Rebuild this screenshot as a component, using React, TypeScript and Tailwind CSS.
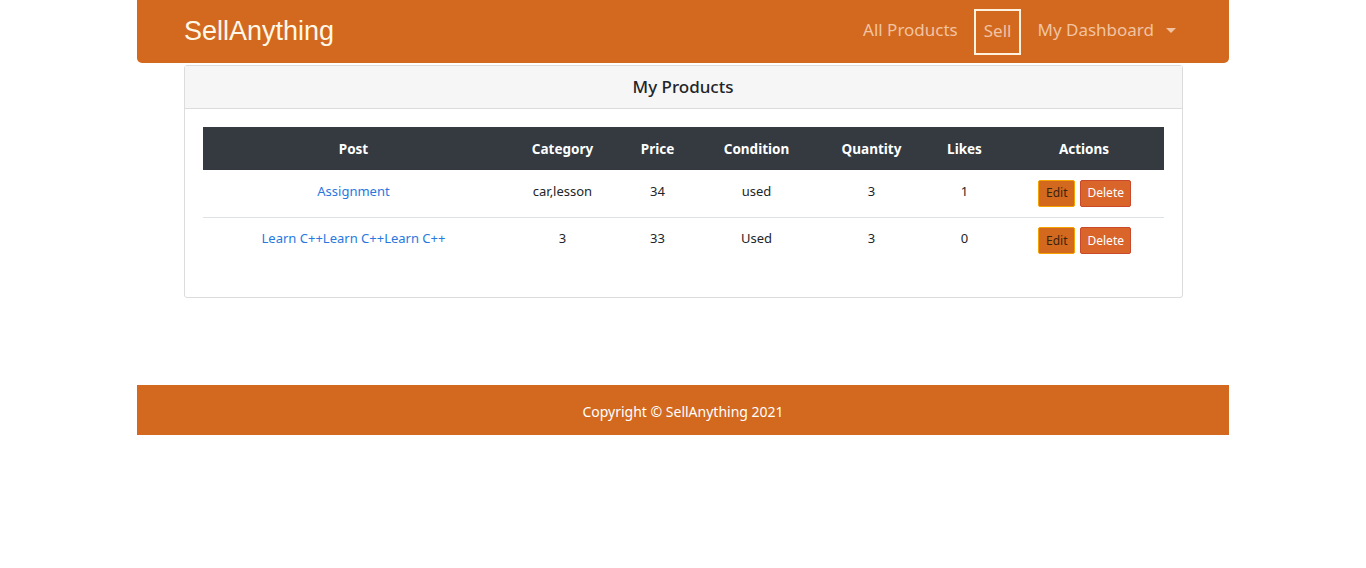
const products = [
  { id: 1, post: "Assignment", category: "car,lesson", price: 34, condition: "used", quantity: 3, likes: 1 },
  { id: 2, post: "Learn C++Learn C++Learn C++", category: "3", price: 33, condition: "Used", quantity: 3, likes: 0 },
];

const cols = [
  { label: "Post", w: "w-[302px]" },
  { label: "Category", w: "w-[116px]" },
  { label: "Price", w: "w-[74px]" },
  { label: "Condition", w: "w-[124px]" },
  { label: "Quantity", w: "w-[106px]" },
  { label: "Likes", w: "w-[80px]" },
  { label: "Actions", w: "w-[159px]" },
];

export default function App() {
  return (
    <div className="min-h-[568px] bg-white font-['Noto_Sans',sans-serif] text-[#212529]">
      <div className="mx-auto w-[1092px]">
        <nav className="flex h-[63px] items-center justify-between rounded-b-[5px] bg-[#d2691e] pl-[47px] pr-[45px]">
          <a className="font-['Liberation_Sans',Arial,sans-serif] text-[27px] leading-none text-[#fff8e8]">
            SellAnything
          </a>
          <div className="flex items-center text-[17px] text-[#f1c3a2]">
            <span className="px-[8px] pb-[3px]">All Products</span>
            <span className="mx-[8px] flex h-[46px] items-center border-2 border-[#fff3e0] px-[8px] pb-[1px]">Sell</span>
            <span className="flex items-center px-[8px] pb-[3px]">
              My Dashboard
              <span className="ml-[12px] inline-block h-0 w-0 border-x-[5px] border-t-[5px] border-x-transparent border-t-[#f1c3a2]" />
            </span>
          </div>
        </nav>

        <div className="mx-auto mt-[2px] w-[999px] rounded-[3px] border border-[#dcdcdc]">
          <div className="flex h-[43px] items-center justify-center border-b border-[#dcdcdc] bg-[#f6f6f6] text-[17px] font-medium text-[#212529]">
            My Products
          </div>
          <div className="px-[18px] pb-[33px] pt-[18px]">
            <table className="w-[961px] table-fixed border-collapse text-[13px]">
              <thead>
                <tr className="h-[43px] bg-[#343a40] text-[13.5px] text-white">
                  {cols.map((c) => (
                    <th key={c.label} className={`${c.w} pt-[1px] font-bold`}>
                      {c.label}
                    </th>
                  ))}
                </tr>
              </thead>
              <tbody>
                {products.map((p, i) => (
                  <tr key={p.id} className={`h-[47px] text-center ${i > 0 ? "border-t border-[#dee2e6]" : ""}`}>
                    <td className="pb-[4px] text-[#2878e0]">{p.post}</td>
                    <td className="pb-[4px]">{p.category}</td>
                    <td className="pb-[4px]">{p.price}</td>
                    <td className="pb-[4px]">{p.condition}</td>
                    <td className="pb-[4px]">{p.quantity}</td>
                    <td className="pb-[4px]">{p.likes}</td>
                    <td>
                      <div className="flex justify-center gap-[5px] pl-[1px]">
                        <button className="h-[27px] rounded-[2px] border border-[#f5a300] bg-[#d2691e] px-[7px] text-[12px] text-[#3a2410]">
                          Edit
                        </button>
                        <button className="h-[27px] rounded-[2px] border border-[#c84a2a] bg-[#d9652a] px-[6px] text-[12px] text-white">
                          Delete
                        </button>
                      </div>
                    </td>
                  </tr>
                ))}
              </tbody>
            </table>
          </div>
        </div>

        <footer className="mt-[87px] flex h-[50px] items-center justify-center bg-[#d2691e] pt-[3px] text-[14px] text-white">
          Copyright © SellAnything 2021
        </footer>
      </div>
    </div>
  );
}
